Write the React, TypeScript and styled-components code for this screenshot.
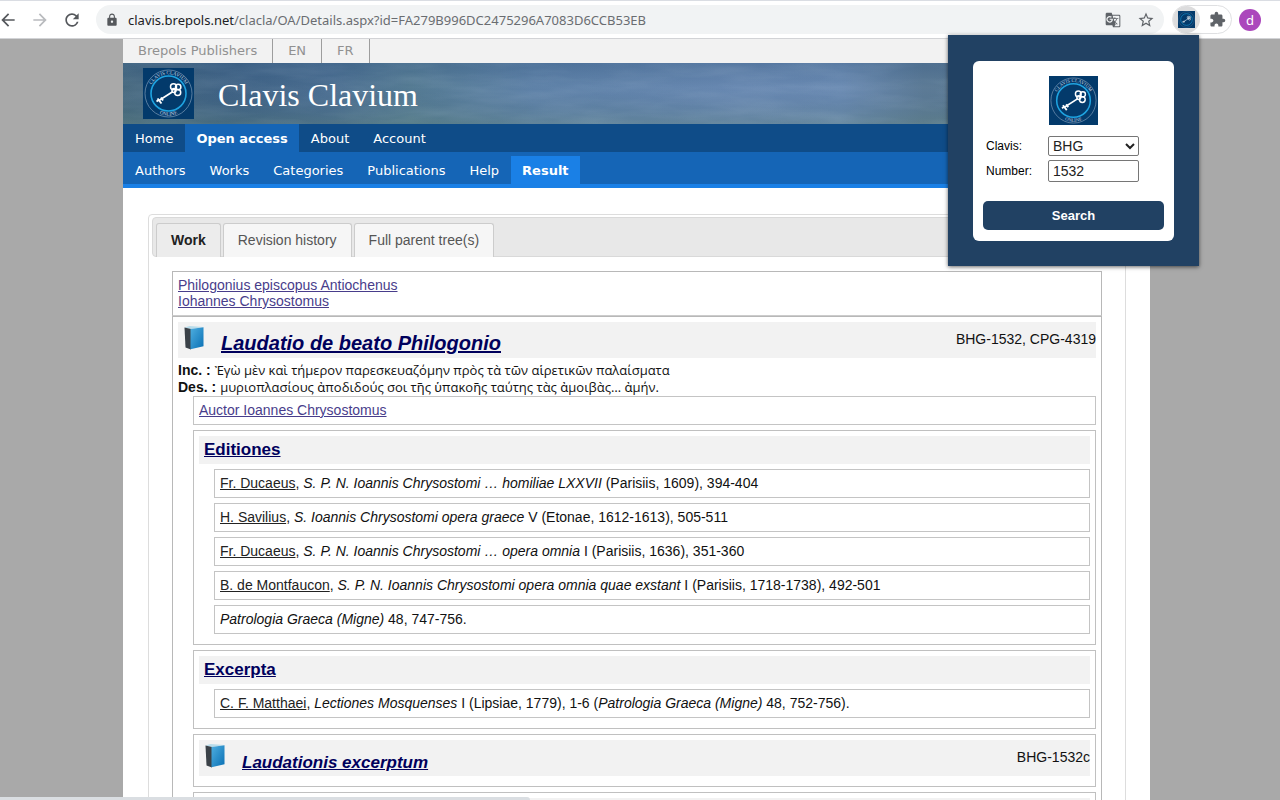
import React from "react";
import styled, { createGlobalStyle } from "styled-components";
import { MdArrowBack, MdArrowForward, MdRefresh, MdLock, MdStarBorder, MdExtension, MdGTranslate } from "react-icons/md";

const GlobalStyle = createGlobalStyle`
  *, *::before, *::after { box-sizing: border-box; }
  body { margin: 0; background: #a9a9a9; font: 14px/16px "Liberation Sans", Arial, sans-serif; color: #111; }
  button, input, select { font-family: inherit; margin: 0; }
  ul { list-style: none; margin: 0; padding: 0; }
`;

const verdana = `"DejaVu Sans", Verdana, sans-serif`;

const Window = styled.div`
  position: relative;
  display: flex;
  flex-direction: column;
  height: 100vh;
  overflow: hidden;
`;

const BrowserBar = styled.header`
  flex: none;
  display: flex;
  align-items: center;
  height: 39px;
  padding-right: 19px;
  background: #fff;
  border-top: 1px solid #dadde3;
  border-bottom: 1px solid #d2d3d6;
`;

const NavButton = styled.button<{ $muted?: boolean }>`
  display: flex;
  width: 32px;
  padding: 0 16px 0 0;
  justify-content: center;
  border: 0;
  background: none;
  font-size: 20px;
  color: ${(p) => (p.$muted ? "#b9bbbe" : "#55585c")};
  svg { flex: none; }
`;

const AddressBar = styled.div`
  flex: 1;
  display: flex;
  align-items: center;
  height: 29px;
  padding: 0 9px;
  border-radius: 15px;
  background: #f1f3f4;
  color: #55585c;
`;

const Address = styled.div`
  flex: 1;
  padding-left: 9px;
  font: 13px/20px "Noto Sans", sans-serif;
  color: #6a6d71;
  b { font-weight: 400; color: #202124; }
`;

const IconButton = styled.button`
  display: flex;
  padding: 0;
  margin-left: 16px;
  border: 0;
  background: none;
  color: #5f6368;
`;

const Extensions = styled.div`
  display: flex;
  align-items: center;
  width: 60px;
  height: 29px;
  margin: 0 7px 0 8px;
  border: 1px solid #dfe0e2;
  border-radius: 15px;
`;

const ActiveExtension = styled.button`
  display: grid;
  place-items: center;
  width: 27px;
  height: 27px;
  padding: 0;
  border: 0;
  border-radius: 50%;
  background: #dcdcdd;
`;

const PuzzleButton = styled(IconButton)`
  margin-left: 9px;
`;

const Avatar = styled.button`
  width: 22px;
  height: 22px;
  padding: 0;
  border: 0;
  border-radius: 50%;
  background: #ab47bc;
  color: #fff;
  font: 13px/22px "Noto Sans", sans-serif;
`;

const Page = styled.main`
  flex: 1;
  display: flex;
  flex-direction: column;
  min-height: 0;
  overflow: hidden;
  margin: 0 130px 0 123px;
  background: #fff;
  > * { flex: none; }
`;

const Languages = styled.nav`
  display: flex;
  height: 24px;
  background: #f2f2f2;
  font: 13px/24px ${verdana};
  a { padding: 0 15px; color: #919191; text-decoration: none; border-right: 1px solid #9d9d9d; }
`;

const Banner = styled.div`
  display: grid;
  height: 61px;
  > * { grid-area: 1 / 1; }
`;

const BannerArt = styled.svg`
  display: block;
  width: 100%;
  height: 61px;
`;

const Brand = styled.div`
  z-index: 1;
  display: flex;
  align-items: center;
  gap: 24px;
  padding-left: 20px;
`;

const SiteTitle = styled.h1`
  margin: 0;
  padding-top: 2px;
  font: 400 32px/36px "Liberation Serif", "Times New Roman", serif;
  color: #fff;
`;

const MenuBar = styled.nav<{ $sub?: boolean }>`
  display: flex;
  background: ${(p) => (p.$sub ? "#1565b6" : "#0f4c88")};
  padding-top: ${(p) => (p.$sub ? "4px" : "0")};
  border-bottom: ${(p) => (p.$sub ? "4px solid #1a80e6" : "0")};
`;

const MenuLink = styled.a<{ $active?: string }>`
  height: 28px;
  padding: 1px ${(p) => (p.$active ? "11px" : "12px")} 0;
  font: 13px/28px ${verdana};
  font-weight: ${(p) => (p.$active ? 700 : 400)};
  color: #fff;
  text-decoration: none;
  background: ${(p) => p.$active || "none"};
`;

const TabPanel = styled.section`
  margin: 26px 24px 0 25px;
  padding: 2px 3px;
  border: 1px solid #ddd;
  border-radius: 4px;
`;

const TabStrip = styled.div`
  display: flex;
  gap: 2px;
  height: 40px;
  padding: 5px 3px 0;
  border: 1px solid #d9d9d9;
  border-radius: 4px;
  background: #e8e8e8;
`;

const Tab = styled.button<{ $active?: boolean }>`
  height: 34px;
  padding: 0 14px 1px;
  border: 1px solid #ccc;
  border-bottom: 0;
  border-radius: 3px 3px 0 0;
  background: ${(p) => (p.$active ? "#ececec" : "#f6f6f6")};
  font-size: 14px;
  font-weight: ${(p) => (p.$active ? 700 : 400)};
  color: ${(p) => (p.$active ? "#212121" : "#555")};
`;

const Record = styled.div`
  margin: 14px 20px 0;
`;

const Box = styled.div`
  padding: 5px;
  border: 1px solid #b8b8b8;
`;

const Authors = styled(Box)`
  height: 45px;
  border-bottom-color: #ccc;
`;

const Auctor = styled(Box)`
  height: 29px;
  margin-left: 15px;
  border-color: #c4c4c4;
`;

const Section = styled(Box)`
  margin: 5px 0 0 15px;
  padding-bottom: 10px;
  border-color: #c0c0c0;
`;

const PersonLink = styled.a`
  display: table;
  color: #483d8b;
`;

const TitleBar = styled.div`
  display: flex;
  gap: 14px;
  height: 36px;
  padding-left: 5px;
  background: #f2f2f2;
`;

const WorkTitle = styled.h2<{ $small?: boolean }>`
  flex: 1;
  margin: 0;
  padding-top: ${(p) => (p.$small ? "10px" : "8px")};
  font: italic 700 ${(p) => (p.$small ? "17px" : "20px")} / 26px "Liberation Sans", Arial, sans-serif;
  a { color: #00005c; }
`;

const Reference = styled.span`
  padding-top: 9px;
`;

const IncipitGroup = styled.div`
  padding-top: 4px;
`;

const Incipit = styled.p`
  display: flex;
  gap: 4px;
  height: 17px;
  margin: 0;
  font: 13px/17px "Open Sans", "Noto Sans", sans-serif;
  b { font: 700 14px/17px "Liberation Sans", Arial, sans-serif; }
`;

const SectionTitle = styled.h3`
  margin: 0;
  padding-left: 5px;
  background: #f2f2f2;
  font: 700 17px/28px "Liberation Sans", Arial, sans-serif;
  a { color: #00005c; }
`;

const Entry = styled.li`
  height: 29px;
  margin: 5px 0 0 15px;
  padding: 5px;
  border: 1px solid #c4c4c4;
  a { color: #222; }
`;

const Popup = styled.aside`
  position: absolute;
  top: 35px;
  right: 81px;
  width: 251px;
  padding: 26px 25px 25px;
  background: #214163;
  box-shadow: 0 1px 4px rgba(0, 0, 0, 0.6);
`;

const Card = styled.form`
  display: flex;
  flex-direction: column;
  align-items: center;
  padding: 15px 10px 11px;
  border-radius: 6px;
  background: #fff;
`;

const Fields = styled.div`
  display: grid;
  grid-template-columns: 62px 91px;
  align-items: center;
  align-self: stretch;
  gap: 4px 0;
  padding: 11px 0 19px 3px;
  font-size: 12px;
  color: #000;
`;

const Select = styled.select`
  height: 20px;
  padding: 0;
  border: 1px solid #767676;
  border-radius: 2px;
  background: #fff;
  font-size: 14px;
  color: #222;
`;

const TextBox = styled.input`
  width: 100%;
  height: 22px;
  padding: 0 4px;
  border: 1px solid #767676;
  border-radius: 2px;
  font-size: 14px;
  color: #222;
`;

const SearchButton = styled.button`
  align-self: stretch;
  height: 29px;
  border: 0;
  border-radius: 5px;
  background: #214163;
  color: #fff;
  font-size: 13px;
  font-weight: 700;
`;

const StatusBubble = styled.div`
  position: absolute;
  left: 0;
  bottom: 0;
  width: 530px;
  height: 3px;
  border-radius: 0 4px 0 0;
  background: #dadee2;
`;

function Logo({ size }: { size: number }) {
  const id = `ring${size}`;
  return (
    <svg width={size} height={size} viewBox="0 0 51 51" aria-hidden="true">
      <rect width="51" height="51" fill="#033a6b" />
      <circle cx="25.500" cy="25.500" r="23.500" fill="none" stroke="#6f8fae" strokeWidth=".8" />
      <circle cx="25.500" cy="25.500" r="17.500" fill="none" stroke="#1fa3e0" strokeWidth="1.600" />
      {size > 20 && (
        <>
          <path id={`${id}a`} d="M6.300 25.500a19.200 19.200 0 0 1 38.400 0" fill="none" />
          <path id={`${id}b`} d="M3.300 25.500a22.200 22.200 0 0 0 44.400 0" fill="none" />
          <g fill="#c9d6e3" fontFamily="Liberation Serif" fontSize="5" textAnchor="middle">
            <text><textPath href={`#${id}a`} startOffset="50%">CLAVIS CLAVIUM</textPath></text>
            <text><textPath href={`#${id}b`} startOffset="50%">ONLINE</textPath></text>
          </g>
        </>
      )}
      <g fill="none" stroke="#fff">
        <path d="M16 32.500 30 23.500" strokeWidth="1.700" />
        <path d="m14.500 30.500 4 5M13.500 33.500l3-2M18 29.500l2 3" strokeWidth="1.900" />
        <circle cx="30.500" cy="18.700" r="3" strokeWidth="1.500" />
        <circle cx="35.200" cy="19" r="2.700" strokeWidth="1.500" />
        <circle cx="34.700" cy="24.500" r="3" strokeWidth="1.500" />
        <circle cx="31" cy="22.500" r="2" strokeWidth="1.500" />
      </g>
    </svg>
  );
}

function Book() {
  return (
    <svg width="24" height="28" viewBox="0 0 24 28" aria-hidden="true">
      <defs>
        <linearGradient id="cover" x1="0" y1="0" x2="1" y2="1">
          <stop offset="0" stopColor="#4eaee0" />
          <stop offset="1" stopColor="#0a70b4" />
        </linearGradient>
      </defs>
      <path d="M1.500 5.500 6.500 4 20 5 8 7z" fill="#b9dcea" />
      <path d="M1.500 5.500 8 7v20.500l-5.500-2z" fill="#3a4147" />
      <path d="M7.500 7 20.500 5.300v19L7.500 27.300z" fill="url(#cover)" />
    </svg>
  );
}

function Sky() {
  return (
    <BannerArt preserveAspectRatio="none" viewBox="0 0 1027 61" aria-hidden="true">
      <defs>
        <linearGradient id="sky">
          <stop offset="0" stopColor="#46687e" />
          <stop offset=".1" stopColor="#3f6284" />
          <stop offset=".2" stopColor="#4a6d90" />
          <stop offset=".28" stopColor="#557b93" />
          <stop offset=".4" stopColor="#5f82a8" />
          <stop offset=".6" stopColor="#6888b1" />
          <stop offset=".7" stopColor="#6a8ab2" />
          <stop offset=".78" stopColor="#5d7b96" />
          <stop offset="1" stopColor="#587a90" />
        </linearGradient>
        <linearGradient id="shade" x2="0" y2="1">
          <stop offset="0" stopColor="#2f5580" stopOpacity=".35" />
          <stop offset=".4" stopColor="#2f5580" stopOpacity="0" />
          <stop offset="1" stopColor="#5b8070" stopOpacity=".3" />
        </linearGradient>
        <filter id="streaks" x="0" y="0" width="100%" height="100%">
          <feTurbulence type="fractalNoise" baseFrequency=".012 .07" numOctaves="4" seed="7" />
          <feColorMatrix values="0 0 0 0 .7  0 0 0 0 .82  0 0 0 0 .9  .9 0 0 0 -.32" />
        </filter>
      </defs>
      <rect width="1027" height="61" fill="url(#sky)" />
      <rect width="1027" height="61" fill="url(#shade)" />
      <rect width="1027" height="61" filter="url(#streaks)" opacity=".22" />
    </BannerArt>
  );
}

const editions = [
  { author: "Fr. Ducaeus", title: "S. P. N. Ioannis Chrysostomi … homiliae LXXVII", rest: " (Parisiis, 1609), 394-404" },
  { author: "H. Savilius", title: "S. Ioannis Chrysostomi opera graece", rest: " V (Etonae, 1612-1613), 505-511" },
  { author: "Fr. Ducaeus", title: "S. P. N. Ioannis Chrysostomi … opera omnia", rest: " I (Parisiis, 1636), 351-360" },
  { author: "B. de Montfaucon", title: "S. P. N. Ioannis Chrysostomi opera omnia quae exstant", rest: " I (Parisiis, 1718-1738), 492-501" },
  { author: "", title: "Patrologia Graeca (Migne)", rest: " 48, 747-756." },
];

export default function App() {
  return (
    <Window>
      <GlobalStyle />
      <BrowserBar>
        <NavButton aria-label="Back"><MdArrowBack /></NavButton>
        <NavButton aria-label="Forward" $muted><MdArrowForward /></NavButton>
        <NavButton aria-label="Reload"><MdRefresh /></NavButton>
        <AddressBar>
          <MdLock size={14} />
          <Address><b>clavis.brepols.net</b>/clacla/OA/Details.aspx?id=FA279B996DC2475296A7083D6CCB53EB</Address>
          <IconButton aria-label="Translate"><MdGTranslate size={16} /></IconButton>
          <IconButton aria-label="Bookmark"><MdStarBorder size={18} /></IconButton>
        </AddressBar>
        <Extensions>
          <ActiveExtension aria-label="Clavis Clavium"><Logo size={17} /></ActiveExtension>
          <PuzzleButton aria-label="Extensions"><MdExtension size={17} /></PuzzleButton>
        </Extensions>
        <Avatar>d</Avatar>
      </BrowserBar>

      <Page>
        <Languages>
          <a href="#publishers">Brepols Publishers</a>
          <a href="#en">EN</a>
          <a href="#fr">FR</a>
        </Languages>
        <Banner>
          <Sky />
          <Brand>
            <Logo size={51} />
            <SiteTitle>Clavis Clavium</SiteTitle>
          </Brand>
        </Banner>
        <MenuBar>
          <MenuLink href="#home">Home</MenuLink>
          <MenuLink href="#open" $active="#1565b6">Open access</MenuLink>
          <MenuLink href="#about">About</MenuLink>
          <MenuLink href="#account">Account</MenuLink>
        </MenuBar>
        <MenuBar $sub>
          <MenuLink href="#authors">Authors</MenuLink>
          <MenuLink href="#works">Works</MenuLink>
          <MenuLink href="#categories">Categories</MenuLink>
          <MenuLink href="#publications">Publications</MenuLink>
          <MenuLink href="#help">Help</MenuLink>
          <MenuLink href="#result" $active="#1a80e6">Result</MenuLink>
        </MenuBar>

        <TabPanel>
          <TabStrip>
            <Tab $active>Work</Tab>
            <Tab>Revision history</Tab>
            <Tab>Full parent tree(s)</Tab>
          </TabStrip>
          <Record>
            <Authors>
              <PersonLink href="#philogonius">Philogonius episcopus Antiochenus</PersonLink>
              <PersonLink href="#iohannes">Iohannes Chrysostomus</PersonLink>
            </Authors>
            <Box>
              <TitleBar>
                <Book />
                <WorkTitle><a href="#laudatio">Laudatio de beato Philogonio</a></WorkTitle>
                <Reference>BHG-1532, CPG-4319</Reference>
              </TitleBar>
              <IncipitGroup>
                <Incipit><b>Inc. :</b> Ἐγὼ μὲν καὶ τήμερον παρεσκευαζόμην πρὸς τὰ τῶν αἱρετικῶν παλαίσματα</Incipit>
                <Incipit><b>Des. :</b> μυριοπλασίους ἀποδιδούς σοι τῆς ὑπακοῆς ταύτης τὰς ἀμοιβὰς… ἀμήν.</Incipit>
              </IncipitGroup>
              <Auctor>
                <PersonLink href="#auctor">Auctor Ioannes Chrysostomus</PersonLink>
              </Auctor>
              <Section>
                <SectionTitle><a href="#editiones">Editiones</a></SectionTitle>
                <ul>
                  {editions.map((e, i) => (
                    <Entry key={i}>
                      {e.author && <><a href="#author">{e.author}</a>, </>}
                      <i>{e.title}</i>{e.rest}
                    </Entry>
                  ))}
                </ul>
              </Section>
              <Section>
                <SectionTitle><a href="#excerpta">Excerpta</a></SectionTitle>
                <ul>
                  <Entry>
                    <a href="#matthaei">C. F. Matthaei</a>, <i>Lectiones Mosquenses</i> I (Lipsiae, 1779), 1-6 (<i>Patrologia Graeca (Migne)</i> 48, 752-756).
                  </Entry>
                </ul>
              </Section>
              <Section>
                <TitleBar>
                  <Book />
                  <WorkTitle $small><a href="#excerptum">Laudationis excerptum</a></WorkTitle>
                  <Reference>BHG-1532c</Reference>
                </TitleBar>
              </Section>
              <Section>
                <TitleBar />
              </Section>
            </Box>
          </Record>
        </TabPanel>
      </Page>

      <Popup>
        <Card onSubmit={(e) => e.preventDefault()}>
          <Logo size={49} />
          <Fields>
            <label htmlFor="clavis">Clavis:</label>
            <Select id="clavis" defaultValue="BHG"><option>BHG</option></Select>
            <label htmlFor="number">Number:</label>
            <TextBox id="number" defaultValue="1532" />
          </Fields>
          <SearchButton type="submit">Search</SearchButton>
        </Card>
      </Popup>
      <StatusBubble />
    </Window>
  );
}
